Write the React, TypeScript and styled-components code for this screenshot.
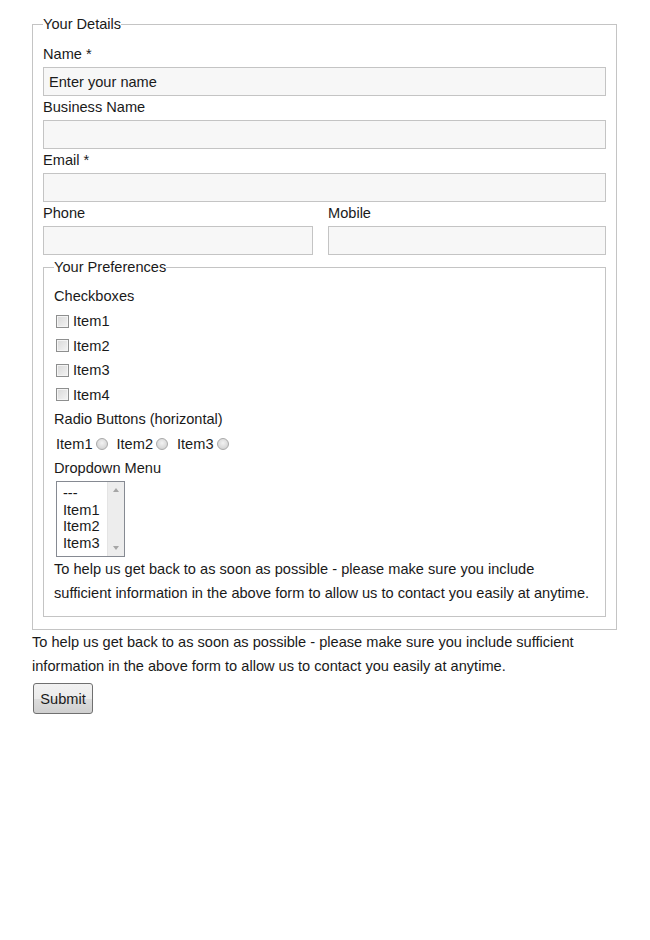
import React from "react";
import styled, { createGlobalStyle } from "styled-components";

const GlobalStyle = createGlobalStyle`
  body {
    margin: 0;
    background: #ffffff;
    font-family: "Liberation Sans", Arial, sans-serif;
    font-size: 14.6px;
    color: #1a1a1a;
  }
`;

const CHECKBOX_ITEMS = ["Item1", "Item2", "Item3", "Item4"];
const RADIO_ITEMS = ["Item1", "Item2", "Item3"];
const OPTIONS = ["---", "Item1", "Item2", "Item3"];
const HELP_TEXT =
  "To help us get back to as soon as possible - please make sure you include sufficient information in the above form to allow us to contact you easily at anytime.";

const App = () => {
  return (
    <SPage>
      <GlobalStyle />
      <SForm onSubmit={(e) => e.preventDefault()}>
        <SFieldset>
          <SLegend>Your Details</SLegend>
          <SLabel htmlFor="name">Name *</SLabel>
          <SInput id="name" placeholder="Enter your name" />
          <SLabel htmlFor="business">Business Name</SLabel>
          <SInput id="business" />
          <SLabel htmlFor="email">Email *</SLabel>
          <SInput id="email" />
          <SRow>
            <div>
              <SLabel htmlFor="phone">Phone</SLabel>
              <SInput id="phone" />
            </div>
            <div>
              <SLabel htmlFor="mobile">Mobile</SLabel>
              <SInput id="mobile" />
            </div>
          </SRow>

          <SInnerFieldset>
            <SLegend>Your Preferences</SLegend>
            <SLabel as="div">Checkboxes</SLabel>
            <SCheckGroup>
              {CHECKBOX_ITEMS.map((item) => (
                <SCheckRow key={item}>
                  <SCheckbox type="checkbox" />
                  {item}
                </SCheckRow>
              ))}
            </SCheckGroup>
            <SLabel as="div">Radio Buttons (horizontal)</SLabel>
            <SRadioRow>
              {RADIO_ITEMS.map((item) => (
                <SRadioLabel key={item}>
                  {item}
                  <SRadio type="radio" name="radio" />
                </SRadioLabel>
              ))}
            </SRadioRow>
            <SLabel as="div">Dropdown Menu</SLabel>
            <SListbox role="listbox">
              <SOptions>
                {OPTIONS.map((opt) => (
                  <SOption key={opt} role="option">
                    {opt}
                  </SOption>
                ))}
              </SOptions>
              <SScrollbar>
                <SArrow $up />
                <SArrow />
              </SScrollbar>
            </SListbox>
            <SHelp>{HELP_TEXT}</SHelp>
          </SInnerFieldset>
        </SFieldset>
        <SHelp>{HELP_TEXT}</SHelp>
        <SSubmit type="submit">Submit</SSubmit>
      </SForm>
    </SPage>
  );
};

const SPage = styled.div`
  padding: 16px 0 0 32px;
`;

const SForm = styled.form`
  width: 585px;
`;

const SFieldset = styled.fieldset`
  margin: 0;
  padding: 12px 10px 10px;
  border: 1px solid #c4c4c4;
  min-width: 0;
`;

const SInnerFieldset = styled(SFieldset)`
  margin: 3px 0 2px;
  padding: 11px 10px 10px;
`;

const SLegend = styled.legend`
  padding: 0;
  line-height: 16px;
  color: #1a1a1a;
`;

const SLabel = styled.label`
  display: block;
  line-height: 21px;
  margin-bottom: 2px;
`;

const SInput = styled.input`
  display: block;
  box-sizing: border-box;
  width: 100%;
  height: 29px;
  margin: 0 0 1px;
  padding: 0 5px;
  border: 1px solid #c4c4c4;
  border-radius: 0;
  background: #f7f7f7;
  font-family: "Liberation Sans", Arial, sans-serif;
  font-size: 14.6px;
  color: #1a1a1a;
  outline: none;

  &::placeholder {
    color: #1a1a1a;
    opacity: 1;
  }
`;

const SRow = styled.div`
  display: grid;
  grid-template-columns: 270px 1fr;
  column-gap: 15px;
`;

const SCheckGroup = styled.div`
  padding-bottom: 2px;
`;

const SCheckRow = styled.label`
  display: flex;
  align-items: center;
  height: 24.5px;
  padding-left: 2px;
`;

const SCheckbox = styled.input`
  appearance: none;
  width: 13px;
  height: 13px;
  margin: 0 4px 0 0;
  border: 1px solid #8e8f8f;
  background: linear-gradient(135deg, #d8d8d8 0%, #f4f4f4 100%);
  box-shadow: inset 0 0 0 1px #f4f4f4;
  flex: none;
`;

const SRadioRow = styled.div`
  display: flex;
  align-items: center;
  box-sizing: border-box;
  height: 26px;
  padding: 0 0 3px 2px;
  gap: 9px;
`;

const SRadioLabel = styled.label`
  display: flex;
  align-items: center;
  gap: 3px;
`;

const SRadio = styled.input`
  appearance: none;
  width: 12px;
  height: 12px;
  margin: 0;
  border: 1px solid #a9a9a9;
  border-radius: 50%;
  background: radial-gradient(circle at 50% 40%, #f2f2f2 0%, #d6d6d6 70%);
  flex: none;
`;

const SListbox = styled.div`
  display: flex;
  box-sizing: border-box;
  width: 69px;
  height: 76px;
  margin-left: 2px;
  border: 1px solid #868a92;
  background: #ffffff;
`;

const SOptions = styled.div`
  flex: 1;
  padding: 3px 0 0 6px;
`;

const SOption = styled.div`
  line-height: 16.6px;
`;

const SScrollbar = styled.div`
  width: 17px;
  display: flex;
  flex-direction: column;
  justify-content: space-between;
  align-items: center;
  padding: 6px 0;
  box-sizing: border-box;
  background: #ededed;
  border-left: 1px solid #e4e4e4;
`;

const SArrow = styled.div<{ $up?: boolean }>`
  width: 0;
  height: 0;
  border-left: 3.5px solid transparent;
  border-right: 3.5px solid transparent;
  ${({ $up }) =>
    $up ? "border-bottom: 4px solid #a6a6a6;" : "border-top: 4px solid #a6a6a6;"}
`;

const SHelp = styled.p`
  margin: 0;
  line-height: 24.3px;
`;

const SSubmit = styled.button`
  margin: 5px 0 0 1px;
  width: 60px;
  height: 31px;
  padding: 0;
  border: 1px solid #707070;
  border-radius: 3px;
  background: linear-gradient(#f2f2f2 0%, #ebebeb 50%, #dddddd 51%, #cfcfcf 100%);
  font-family: "Liberation Sans", Arial, sans-serif;
  font-size: 14.6px;
  color: #1a1a1a;
`;

export default App;
